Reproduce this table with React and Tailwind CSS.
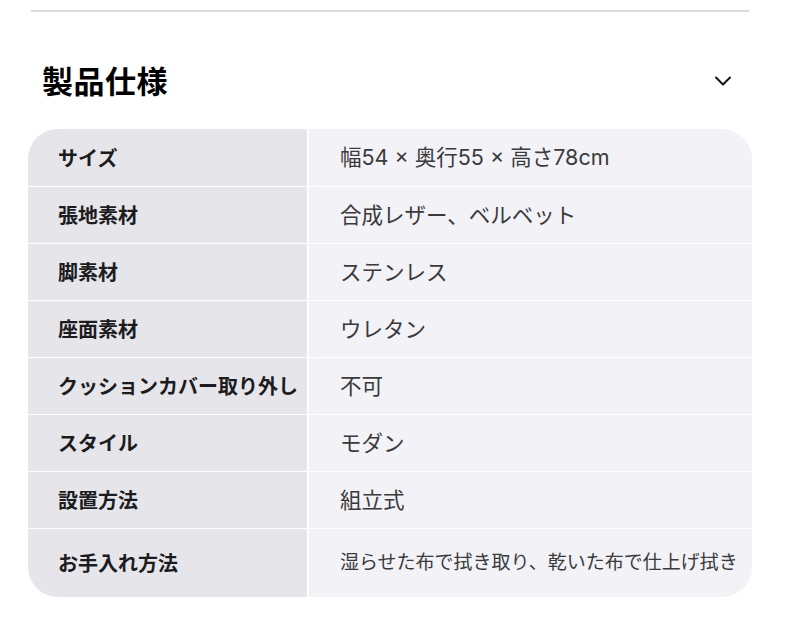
import React from "react";

const specs = [
  { label: "サイズ", value: "幅54 × 奥行55 × 高さ78cm" },
  { label: "張地素材", value: "合成レザー、ベルベット" },
  { label: "脚素材", value: "ステンレス" },
  { label: "座面素材", value: "ウレタン" },
  { label: "クッションカバー取り外し", value: "不可" },
  { label: "スタイル", value: "モダン" },
  { label: "設置方法", value: "組立式" },
  { label: "お手入れ方法", value: "湿らせた布で拭き取り、乾いた布で仕上げ拭き", small: true },
];

const App = () => {
  return (
    <div
      className="w-[790px] h-[632px] bg-white pl-[28px] pr-[38px] pt-[10px]"
      style={{ fontFamily: '"Noto Sans CJK JP", "Noto Sans", sans-serif' }}
    >
      <div className="mx-[3px] h-[2px] bg-[#dadada]" />

      <div className="flex items-center justify-between pl-[14px] pr-[20px] h-[117px] pt-[20px]">
        <h2 className="text-[31px] font-bold text-black tracking-[0.5px]">製品仕様</h2>
        <svg width="18" height="12" viewBox="0 0 18 12" fill="none">
          <path d="M2 2.5 L9 9.5 L16 2.5" stroke="#111" strokeWidth="2" strokeLinecap="round" strokeLinejoin="round" />
        </svg>
      </div>

      <div className="rounded-[30px] overflow-hidden bg-white">
        {specs.map((row, i) => (
          <div
            key={row.label}
            className={`flex ${i > 0 ? "border-t border-white" : ""} ${row.small ? "h-[69px]" : "h-[57px]"}`}
          >
            <div className="w-[279px] shrink-0 bg-[#e5e5ea] flex items-center pl-[30px] text-[20px] font-bold text-[#1c1c1e] whitespace-nowrap">
              {row.label}
            </div>
            <div
              className={`flex-1 ml-[2px] bg-[#f2f2f7] flex items-center pl-[31px] text-[#3a3a3c] whitespace-nowrap font-['Inter','Noto_Sans_CJK_JP',sans-serif] ${
                row.small ? "text-[19px]" : "text-[21.5px]"
              }`}
            >
              {row.value}
            </div>
          </div>
        ))}
      </div>
    </div>
  );
};

export default App;
